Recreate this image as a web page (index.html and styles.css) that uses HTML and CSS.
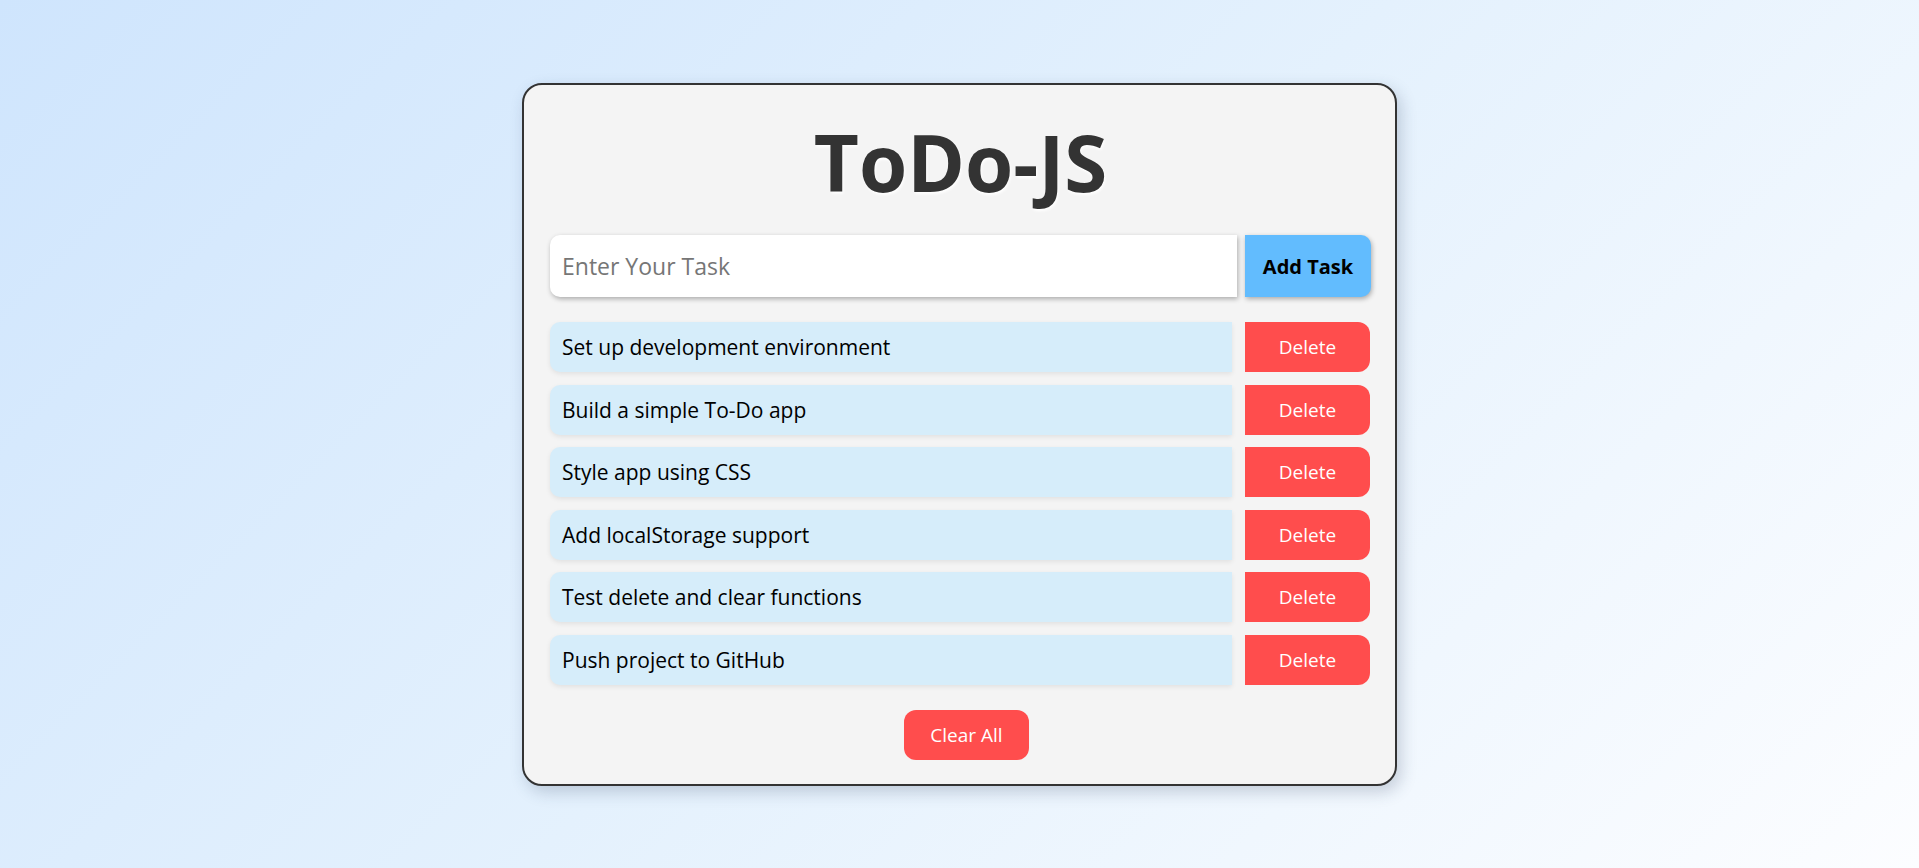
FILE: index.html
```html
<!DOCTYPE html>
<html lang="en">
<head>
<meta charset="utf-8">
<title>ToDo-JS</title>
<link rel="stylesheet" href="styles.css">
</head>
<body>
  <main class="card">
    <h1 class="title">ToDo-JS</h1>
    <form class="add-row">
      <input class="task-input" type="text" placeholder="Enter Your Task">
      <button class="add-btn" type="button">Add Task</button>
    </form>
    <ul class="task-list">
      <li class="task"><span class="task-text">Set up development environment</span><button class="delete-btn" type="button">Delete</button></li>
      <li class="task"><span class="task-text">Build a simple To-Do app</span><button class="delete-btn" type="button">Delete</button></li>
      <li class="task"><span class="task-text">Style app using CSS</span><button class="delete-btn" type="button">Delete</button></li>
      <li class="task"><span class="task-text">Add localStorage support</span><button class="delete-btn" type="button">Delete</button></li>
      <li class="task"><span class="task-text">Test delete and clear functions</span><button class="delete-btn" type="button">Delete</button></li>
      <li class="task"><span class="task-text">Push project to GitHub</span><button class="delete-btn" type="button">Delete</button></li>
    </ul>
    <div class="footer">
      <button class="clear-btn" type="button">Clear All</button>
    </div>
  </main>
</body>
</html>
```

FILE: styles.css
```css
* {
  box-sizing: border-box;
}

html, body {
  margin: 0;
  height: 100%;
}

body {
  font-family: "Open Sans", "Noto Sans", sans-serif;
  background: linear-gradient(135deg, #cfe5fd 0%, #e4f1fd 50%, #fcfdff 100%);
  display: flex;
  justify-content: center;
  align-items: flex-start;
  padding-top: 83px;
}

.card {
  width: 875px;
  background: #f4f4f4;
  border: 2px solid #333;
  border-radius: 20px;
  box-shadow: 4px 6px 16px rgba(40, 60, 90, 0.22);
  padding: 29px 24px 24px 26px;
}

.title {
  margin: 0 0 25px;
  text-align: center;
  font-size: 78px;
  line-height: 96px;
  font-weight: 700;
  color: #333;
  text-shadow: 1px 2px 3px #fff;
}

.add-row {
  display: flex;
  gap: 8px;
  margin: 0 0 25px;
  height: 62px;
}

.task-input {
  flex: 1;
  height: 62px;
  border: none;
  outline: none;
  background: #fff;
  border-radius: 10px 0 0 10px;
  box-shadow: 1px 2px 5px rgba(0, 0, 0, 0.3);
  padding: 0 12px;
  font-family: inherit;
  font-size: 23px;
  color: #222;
}

.task-input::placeholder {
  color: #767676;
}

.add-btn {
  width: 126px;
  height: 62px;
  border: none;
  background: #62bcfe;
  border-radius: 0 10px 10px 0;
  box-shadow: 1px 2px 5px rgba(0, 0, 0, 0.3);
  font-family: inherit;
  font-size: 20px;
  font-weight: 700;
  color: #000;
  padding: 0;
}

.task-list {
  list-style: none;
  margin: 0;
  padding: 0;
  display: flex;
  flex-direction: column;
  gap: 12.5px;
}

.task {
  display: flex;
  gap: 13px;
  height: 50px;
  padding-right: 1px;
}

.task-text {
  flex: 1;
  display: flex;
  align-items: center;
  background: #d6edfa;
  border-radius: 10px 0 0 10px;
  box-shadow: 0 2px 5px rgba(0, 0, 0, 0.08);
  padding: 0 12px;
  font-size: 21px;
  color: #000;
}

.delete-btn {
  width: 125px;
  border: none;
  background: #ff4d4d;
  border-radius: 0 12px 12px 0;
  font-family: inherit;
  font-size: 19px;
  color: #fff;
  padding: 0;
}

.footer {
  display: flex;
  justify-content: center;
  margin-top: 25.5px;
}

.clear-btn {
  width: 125px;
  height: 50px;
  margin-left: 12px;
  border: none;
  background: #ff4d4d;
  border-radius: 12px;
  font-family: inherit;
  font-size: 19px;
  color: #fff;
  padding: 0;
}
```
